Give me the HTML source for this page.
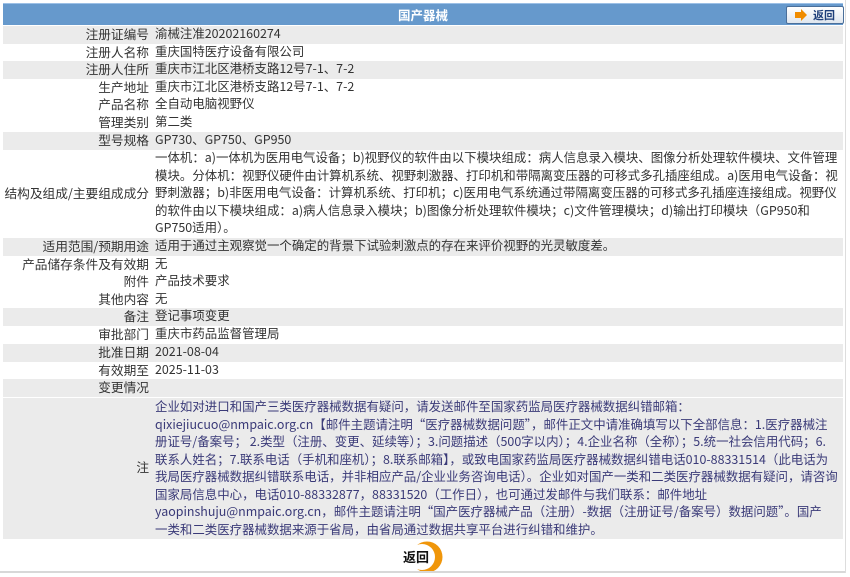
<!DOCTYPE html>
<html><head><meta charset="utf-8"><style>
body{margin:0;width:850px;height:577px;background:#fff;font-family:"Noto Sans CJK SC","Liberation Sans",sans-serif;font-size:12.7px;color:#333;position:relative;overflow:hidden}
.hd{position:absolute;left:3px;top:3px;width:840px;height:21px;background:#6699cc;border-top:1px solid #9cc0e6}
.hd .t{position:absolute;left:0;right:0;top:0;line-height:21px;text-align:center;color:#fff;font-weight:bold;font-size:12.5px}
.btn{position:absolute;left:783px;top:2px;width:56px;height:16px;border:1px solid #4a6f9a;border-radius:2px;background:linear-gradient(#fff,#dfe6ee);font-size:11px;font-weight:bold;color:#1e3f7a;line-height:16px}
.btn .a{position:absolute;left:8px;top:5px;width:6px;height:6px;background:#f08c00}
.btn .a:after{content:"";position:absolute;left:6px;top:-3px;border-left:6px solid #f08c00;border-top:6px solid transparent;border-bottom:6px solid transparent}
.btn span{position:absolute;left:26px;top:0}
.r{position:absolute;left:3px;width:840px;line-height:17.5px}
.g{background:#ebebeb}
.l{position:absolute;left:0;top:-1px;width:146px;text-align:right;white-space:nowrap}
.v{position:absolute;left:152px;top:-1px;width:690px;white-space:nowrap;font-size:12.45px}
.note{color:#3a3a78}
.bline{position:absolute;left:0;top:571px;width:845px;height:2px;background:#d8d8d8}
.rb{position:absolute;left:845px;top:0;width:1px;height:573px;background:#ddd}
</style></head><body>
<div class="hd"><div class="t">国产器械</div><div class="btn"><div class="a"></div><span>返回</span></div></div>

<div class="r g" style="top:26px;height:17.5px"><div class="l">注册证编号</div><div class="v">渝械注准20202160274</div></div>
<div class="r" style="top:43.5px;height:17.5px"><div class="l">注册人名称</div><div class="v">重庆国特医疗设备有限公司</div></div>
<div class="r g" style="top:61px;height:17.5px"><div class="l">注册人住所</div><div class="v">重庆市江北区港桥支路12号7-1、7-2</div></div>
<div class="r" style="top:78.5px;height:17.5px"><div class="l">生产地址</div><div class="v">重庆市江北区港桥支路12号7-1、7-2</div></div>
<div class="r" style="top:96px;height:17.5px"><div class="l">产品名称</div><div class="v">全自动电脑视野仪</div></div>
<div class="r" style="top:113.5px;height:17.5px"><div class="l">管理类别</div><div class="v">第二类</div></div>
<div class="r g" style="top:131.5px;height:18px"><div class="l">型号规格</div><div class="v">GP730、GP750、GP950</div></div>
<div class="r" style="top:150px;height:87.5px"><div class="l" style="top:34px">结构及组成/主要组成成分</div><div class="v">一体机：a)一体机为医用电气设备；b)视野仪的软件由以下模块组成：病人信息录入模块、图像分析处理软件模块、文件管理<br>模块。分体机：视野仪硬件由计算机系统、视野刺激器、打印机和带隔离变压器的可移式多孔插座组成。a)医用电气设备：视<br>野刺激器；b)非医用电气设备：计算机系统、打印机；c)医用电气系统通过带隔离变压器的可移式多孔插座连接组成。视野仪<br>的软件由以下模块组成：a)病人信息录入模块；b)图像分析处理软件模块；c)文件管理模块；d)输出打印模块（GP950和<br>GP750适用）。</div></div>
<div class="r g" style="top:237.5px;height:18px"><div class="l">适用范围/预期用途</div><div class="v">适用于通过主观察觉一个确定的背景下试验刺激点的存在来评价视野的光灵敏度差。</div></div>
<div class="r" style="top:255.5px;height:17.5px"><div class="l">产品储存条件及有效期</div><div class="v">无</div></div>
<div class="r" style="top:273px;height:17.5px"><div class="l">附件</div><div class="v">产品技术要求</div></div>
<div class="r" style="top:290.5px;height:17.5px"><div class="l">其他内容</div><div class="v">无</div></div>
<div class="r g" style="top:308px;height:18px"><div class="l">备注</div><div class="v">登记事项变更</div></div>
<div class="r" style="top:326px;height:17.5px"><div class="l">审批部门</div><div class="v">重庆市药品监督管理局</div></div>
<div class="r g" style="top:343.5px;height:18px"><div class="l">批准日期</div><div class="v">2021-08-04</div></div>
<div class="r" style="top:361.5px;height:17.5px"><div class="l">有效期至</div><div class="v">2025-11-03</div></div>
<div class="r g" style="top:379px;height:18px"><div class="l">变更情况</div><div class="v"></div></div>
<div class="r g" style="top:398px;height:141px"><div class="l" style="top:60px">注</div><div class="v note" style="top:0px">企业如对进口和国产三类医疗器械数据有疑问，请发送邮件至国家药监局医疗器械数据纠错邮箱：<br>qixiejiucuo@nmpaic.org.cn【邮件主题请注明“医疗器械数据问题”，邮件正文中请准确填写以下全部信息：1.医疗器械注<br>册证号/备案号； 2.类型（注册、变更、延续等）；3.问题描述（500字以内）；4.企业名称（全称）；5.统一社会信用代码；6.<br>联系人姓名；7.联系电话（手机和座机）；8.联系邮箱】，或致电国家药监局医疗器械数据纠错电话010-88331514（此电话为<br>我局医疗器械数据纠错联系电话，并非相应产品/企业业务咨询电话）。企业如对国产一类和二类医疗器械数据有疑问，请咨询<br>国家局信息中心，电话010-88332877，88331520（工作日），也可通过发邮件与我们联系：邮件地址<br>yaopinshuju@nmpaic.org.cn，邮件主题请注明“国产医疗器械产品（注册）-数据（注册证号/备案号）数据问题”。国产<br>一类和二类医疗器械数据来源于省局，由省局通过数据共享平台进行纠错和维护。</div></div>

<svg style="position:absolute;left:400px;top:540px" width="50" height="34">
<circle cx="27" cy="17" r="15.5" fill="#f0960a"/>
<circle cx="22" cy="17" r="13" fill="#fff"/>
<text x="3" y="22" font-size="13" font-weight="bold" fill="#111" font-family="Noto Sans CJK SC,sans-serif">返回</text>
</svg>
<div class="bline"></div>
<div class="rb"></div>
</body></html>
